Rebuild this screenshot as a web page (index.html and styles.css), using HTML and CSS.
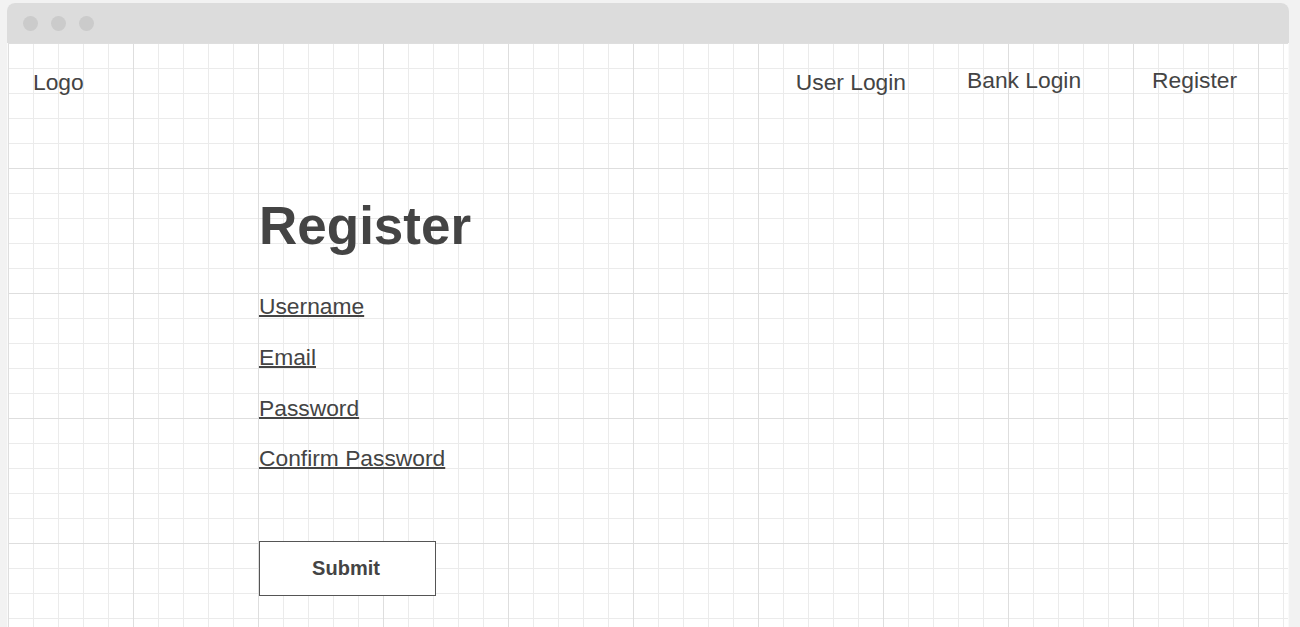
FILE: index.html
```html
<!DOCTYPE html>
<html lang="en">
<head>
<meta charset="utf-8">
<title>Register</title>
<link rel="stylesheet" href="styles.css">
</head>
<body>
<div class="window">
  <div class="titlebar">
    <span class="dot"></span><span class="dot"></span><span class="dot"></span>
  </div>
  <div class="canvas">
    <header class="header">
      <div class="logo">Logo</div>
      <nav class="nav">
        <a class="nav-link nav-user">User Login</a>
        <a class="nav-link nav-bank">Bank Login</a>
        <a class="nav-link nav-register">Register</a>
      </nav>
    </header>
    <main class="form">
      <h1 class="title">Register</h1>
      <div class="fields">
        <a class="field">Username</a>
        <a class="field">Email</a>
        <a class="field">Password</a>
        <a class="field">Confirm Password</a>
      </div>
      <button class="submit">Submit</button>
    </main>
  </div>
</div>
</body>
</html>
```

FILE: styles.css
```css
html, body {
  margin: 0;
  padding: 0;
  height: 627px;
  overflow: hidden;
}
body {
  background: #f2f2f2;
  font-family: "Liberation Sans", Arial, sans-serif;
  color: #444;
  padding: 3px 11px 0 7px;
  box-sizing: border-box;
}
.window {
  width: 1282px;
  height: 640px;
  border-radius: 8px 8px 0 0;
  background: #fafafa;
  display: flex;
  flex-direction: column;
}
.titlebar {
  height: 40px;
  background: #dcdcdc;
  border-radius: 8px 8px 0 0;
  display: flex;
  align-items: center;
  padding-left: 16px;
  gap: 13px;
  flex-shrink: 0;
}
.dot {
  width: 15px;
  height: 15px;
  border-radius: 50%;
  background: #cbcbcb;
}
.canvas {
  flex: 1;
  margin: 0 1px;
  background-color: #fff;
  background-image:
    linear-gradient(to right, #dedede 1px, transparent 1px),
    linear-gradient(to bottom, #dedede 1px, transparent 1px),
    linear-gradient(to right, #ebebeb 1px, transparent 1px),
    linear-gradient(to bottom, #ebebeb 1px, transparent 1px);
  background-size: 125px 125px, 125px 125px, 25px 25px, 25px 25px;
  background-position: 0 0;
}
.header {
  display: flex;
  align-items: flex-start;
  justify-content: space-between;
  padding: 27.7px 51px 0 25px;
  font-size: 22.8px;
  line-height: 22.8px;
}
.nav {
  display: flex;
  align-items: flex-start;
}
.nav-link {
  color: #444;
}
.nav-bank {
  margin-left: 61px;
  margin-top: -2px;
}
.nav-register {
  margin-left: 71px;
  margin-top: -2px;
}
.form {
  padding-left: 251px;
  display: flex;
  flex-direction: column;
  align-items: flex-start;
}
.title {
  margin: 106px 0 0 0;
  font-size: 53px;
  line-height: 53px;
  font-weight: bold;
  color: #444;
}
.fields {
  margin-top: 42.5px;
  display: flex;
  flex-direction: column;
  align-items: flex-start;
  gap: 28px;
}
.field {
  font-size: 22.8px;
  line-height: 22.8px;
  color: #444;
  text-decoration: underline;
  text-decoration-thickness: 1.6px;
}
.submit {
  margin: 71px 0 0 0;
  width: 177px;
  height: 55px;
  background: #fff;
  border: 1px solid #555;
  font-family: "Liberation Sans", Arial, sans-serif;
  font-size: 20px;
  font-weight: bold;
  color: #444;
  padding: 0 3px 0 0;
}
```
